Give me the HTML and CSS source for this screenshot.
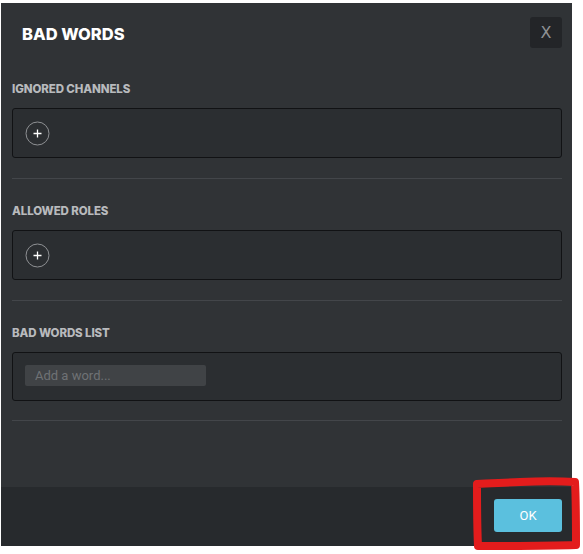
FILE: index.html
```html
<!DOCTYPE html>
<html>
<head>
<meta charset="utf-8">
<link rel="stylesheet" href="styles.css">
</head>
<body>
<div class="modal">
  <div class="header">
    <h1 class="title">BAD WORDS</h1>
    <button class="close">X</button>
  </div>
  <div class="body">
    <div class="section">
      <div class="label">IGNORED CHANNELS</div>
      <div class="box"><svg class="add" width="25" height="25" viewBox="0 0 25 25"><circle cx="12.5" cy="12.5" r="11.5" fill="none" stroke="#8f9194" stroke-width="1"/><path d="M12.5 8.5V16.5M8.5 12.5H16.5" stroke="#ffffff" stroke-width="1.3"/></svg></div>
    </div>
    <div class="section">
      <div class="label">ALLOWED ROLES</div>
      <div class="box"><svg class="add" width="25" height="25" viewBox="0 0 25 25"><circle cx="12.5" cy="12.5" r="11.5" fill="none" stroke="#8f9194" stroke-width="1"/><path d="M12.5 8.5V16.5M8.5 12.5H16.5" stroke="#ffffff" stroke-width="1.3"/></svg></div>
    </div>
    <div class="section last">
      <div class="label">BAD WORDS LIST</div>
      <div class="box"><input class="word" placeholder="Add a word..."></div>
    </div>
  </div>
  <div class="footer">
    <button class="ok">OK</button>
  </div>
</div>
<svg class="scribble" width="583" height="554" viewBox="0 0 583 554">
  <path d="M477 484 C490 483 505 483 520 482 C540 481 560 481 575 482 C576 500 576 525 576 545 C545 546 510 546 478 546 C477 525 477 505 477 484 Z" fill="none" stroke="#e31c1c" stroke-width="8" stroke-linejoin="round" stroke-linecap="round"/>
</svg>
</body>
</html>
```

FILE: styles.css
```css
html, body {
  margin: 0;
  padding: 0;
  background: #ffffff;
}
body {
  position: relative;
  width: 583px;
  height: 554px;
  overflow: hidden;
  font-family: Inter, "Noto Sans", sans-serif;
}
.modal {
  margin: 3px 0 0 1px;
  width: 571px;
  height: 543px;
  background: #303336;
  display: flex;
  flex-direction: column;
}
.header {
  height: 60px;
  display: flex;
  align-items: center;
  justify-content: space-between;
  padding: 0 10px 0 21px;
  box-sizing: border-box;
  flex: none;
}
.title {
  margin: 0;
  margin-top: 1px;
  color: #ffffff;
  font-size: 16.5px;
  font-weight: 800;
  letter-spacing: 0;
}
.close {
  width: 32px;
  height: 31px;
  margin-top: -2px;
  border: none;
  border-radius: 3px;
  background: #232528;
  color: #8e9194;
  font-family: "DejaVu Sans", sans-serif;
  font-size: 16px;
  padding: 0;
}
.body {
  flex: 1;
  padding: 0 10px 0 11px;
}
.section {
  border-bottom: 1px solid #43464a;
  padding-top: 25px;
  padding-bottom: 20px;
}
.section:first-child {
  padding-top: 19px;
}
.section.last {
  padding-bottom: 19px;
}
.section.last .box {
  height: 49px;
}
.label {
  color: #b8babd;
  font-size: 11.5px;
  font-weight: 800;
  letter-spacing: -0.1px;
  line-height: 12px;
  padding-top: 1px;
  margin-bottom: 13px;
}
.box {
  height: 50px;
  box-sizing: border-box;
  border: 1px solid #111214;
  border-radius: 3px;
  background: #2b2e31;
  display: flex;
  align-items: center;
  padding-left: 12px;
}
.add {
  display: block;
}
.word {
  width: 181px;
  height: 21px;
  margin-top: -2px;
  box-sizing: border-box;
  border: none;
  border-radius: 2px;
  background: #404346;
  color: #dddddd;
  font-family: Roboto, "Liberation Sans", sans-serif;
  font-size: 13px;
  padding: 0 10px;
  outline: none;
}
.word::placeholder {
  color: #6f7275;
}
.footer {
  height: 59px;
  flex: none;
  background: #272a2d;
  display: flex;
  align-items: center;
  justify-content: flex-end;
  padding-right: 10px;
}
.ok {
  width: 68px;
  height: 33px;
  border: none;
  border-radius: 3px;
  background: #5bc0de;
  color: #ffffff;
  font-family: Roboto, "Liberation Sans", sans-serif;
  font-size: 13px;
  margin-top: -2px;
}
.scribble {
  position: absolute;
  left: 0;
  top: 0;
  pointer-events: none;
}
```
